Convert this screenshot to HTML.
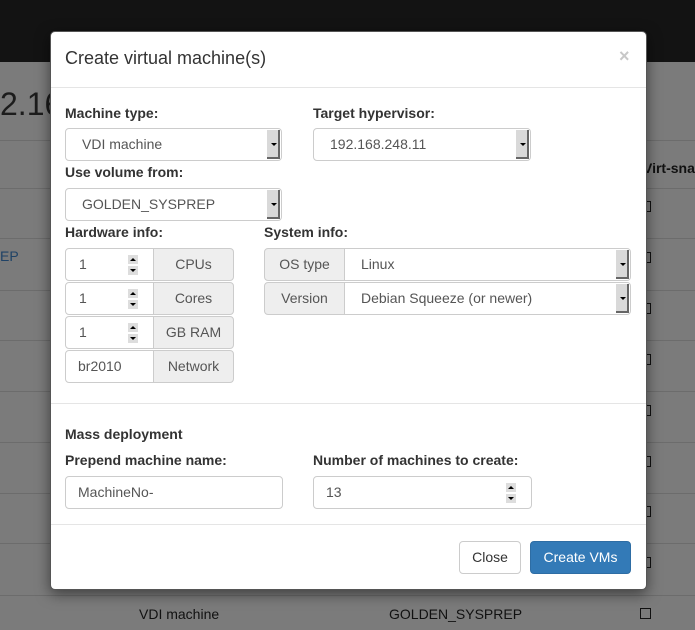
<!DOCTYPE html>
<html><head><style>
*{box-sizing:border-box;margin:0;padding:0}
body{width:695px;height:630px;overflow:hidden;background:#7b7b7b;font-family:"Liberation Sans",sans-serif;font-size:14px;color:#333;position:relative}
.a{position:absolute}
.top{left:0;top:0;width:695px;height:62px;background:#131313}
.hl{left:0;width:695px;height:1px;background:#6c6c6c}
.modal{left:50px;top:31px;width:597px;height:559px;background:#fff;border:1px solid #555;border-radius:5px;box-shadow:0 4px 14px rgba(0,0,0,.5)}
.lbl{font-weight:bold;font-size:14px;color:#333}
.inp{border:1px solid #ccc;border-radius:4px;background:#fff;font-size:14px;color:#555;height:33px;line-height:31px}
.sel .arr{position:absolute;right:1px;top:1px;width:13px;height:29px;background:#d9d9d9;border-right:2px solid #666;border-bottom:2px solid #666}
.sel .arr:after{content:"";position:absolute;left:4px;top:13px;border-left:3px solid transparent;border-right:3px solid transparent;border-top:3px solid #000}
.add{background:#eee;text-align:center;color:#555;border:1px solid #ccc;height:33px;line-height:31px}
.spin{position:absolute;width:10px;height:20px;top:6px}
.spin i{display:block;width:10px;height:9px;background:#ddd;margin-bottom:2px;position:relative}
.spin i:after{content:"";position:absolute;left:2px;top:3px;border-left:3px solid transparent;border-right:3px solid transparent}
.spin i.u:after{border-bottom:3px solid #000}
.spin i.d:after{border-top:3px solid #000}
.cb{width:11px;height:11px;border:1px solid #111;left:640px}
</style></head><body>
<div class="a top"></div>
<div class="a" style="left:0;top:86px;font-size:32px;color:#1c1c1c">2.16</div>
<div class="a hl" style="top:140px"></div>
<div class="a hl" style="top:188px"></div>
<div class="a hl" style="top:238px"></div>
<div class="a hl" style="top:290px"></div>
<div class="a hl" style="top:340px"></div>
<div class="a hl" style="top:391px"></div>
<div class="a hl" style="top:442px"></div>
<div class="a hl" style="top:493px"></div>
<div class="a hl" style="top:543px"></div>
<div class="a hl" style="top:595px"></div>
<div class="a" style="left:0;top:248px;color:#1f4266">EP</div>
<div class="a" style="left:643px;top:160px;font-weight:bold;color:#111;white-space:nowrap">Virt-snap</div>
<div class="a cb" style="top:201px"></div>
<div class="a cb" style="top:252px"></div>
<div class="a cb" style="top:303px"></div>
<div class="a cb" style="top:354px"></div>
<div class="a cb" style="top:405px"></div>
<div class="a cb" style="top:456px"></div>
<div class="a cb" style="top:506px"></div>
<div class="a cb" style="top:557px"></div>
<div class="a cb" style="top:608px"></div>
<div class="a" style="left:139px;top:606px;color:#111">VDI machine</div>
<div class="a" style="left:389px;top:606px;color:#111">GOLDEN_SYSPREP</div>

<div class="a modal"></div>
<div class="a" style="left:65px;top:48px;font-size:18px;color:#333">Create virtual machine(s)</div>
<div class="a" style="left:619px;top:46px;font-size:18px;color:#c8c8c8;font-weight:bold">×</div>
<div class="a" style="left:51px;top:87px;width:595px;height:1px;background:#e5e5e5"></div>

<div class="a lbl" style="left:65px;top:105px">Machine type:</div>
<div class="a lbl" style="left:313px;top:105px">Target hypervisor:</div>
<div class="a inp sel" style="left:65px;top:128px;width:217px;padding-left:16px">VDI machine<span class="arr"></span></div>
<div class="a inp sel" style="left:313px;top:128px;width:218px;padding-left:16px">192.168.248.11<span class="arr"></span></div>
<div class="a lbl" style="left:65px;top:164px">Use volume from:</div>
<div class="a inp sel" style="left:65px;top:188px;width:217px;padding-left:16px">GOLDEN_SYSPREP<span class="arr"></span></div>

<div class="a lbl" style="left:65px;top:224px">Hardware info:</div>
<div class="a lbl" style="left:264px;top:224px">System info:</div>

<div class="a inp" style="left:65px;top:248px;width:89px;padding-left:13px;border-radius:4px 0 0 4px">1<span class="spin" style="left:62px"><i class="u"></i><i class="d"></i></span></div>
<div class="a add" style="left:153px;top:248px;width:81px;border-radius:0 4px 4px 0">CPUs</div>
<div class="a inp" style="left:65px;top:282px;width:89px;padding-left:13px;border-radius:4px 0 0 4px">1<span class="spin" style="left:62px"><i class="u"></i><i class="d"></i></span></div>
<div class="a add" style="left:153px;top:282px;width:81px;border-radius:0 4px 4px 0">Cores</div>
<div class="a inp" style="left:65px;top:316px;width:89px;padding-left:13px;border-radius:4px 0 0 4px">1<span class="spin" style="left:62px"><i class="u"></i><i class="d"></i></span></div>
<div class="a add" style="left:153px;top:316px;width:81px;border-radius:0 4px 4px 0">GB RAM</div>
<div class="a inp" style="left:65px;top:350px;width:89px;padding-left:12px;border-radius:4px 0 0 4px">br2010</div>
<div class="a add" style="left:153px;top:350px;width:81px;border-radius:0 4px 4px 0">Network</div>

<div class="a add" style="left:264px;top:248px;width:81px;border-radius:4px 0 0 4px">OS type</div>
<div class="a inp sel" style="left:344px;top:248px;width:287px;padding-left:16px;border-radius:0 4px 4px 0">Linux<span class="arr"></span></div>
<div class="a add" style="left:264px;top:282px;width:81px;border-radius:4px 0 0 4px">Version</div>
<div class="a inp sel" style="left:344px;top:282px;width:287px;padding-left:16px;border-radius:0 4px 4px 0">Debian Squeeze (or newer)<span class="arr"></span></div>

<div class="a" style="left:51px;top:403px;width:595px;height:1px;background:#e5e5e5"></div>
<div class="a lbl" style="left:65px;top:426px">Mass deployment</div>
<div class="a lbl" style="left:65px;top:452px">Prepend machine name:</div>
<div class="a lbl" style="left:313px;top:452px">Number of machines to create:</div>
<div class="a inp" style="left:65px;top:476px;width:218px;padding-left:12px">MachineNo-</div>
<div class="a inp" style="left:313px;top:476px;width:219px;padding-left:12px">13<span class="spin" style="left:192px"><i class="u"></i><i class="d"></i></span></div>
<div class="a" style="left:51px;top:524px;width:595px;height:1px;background:#e5e5e5"></div>
<div class="a" style="left:459px;top:541px;width:62px;height:33px;border:1px solid #ccc;border-radius:4px;text-align:center;line-height:31px;color:#333">Close</div>
<div class="a" style="left:530px;top:541px;width:101px;height:33px;background:#337ab7;border:1px solid #2e6da4;border-radius:4px;text-align:center;line-height:31px;color:#fff">Create VMs</div>
</body></html>
